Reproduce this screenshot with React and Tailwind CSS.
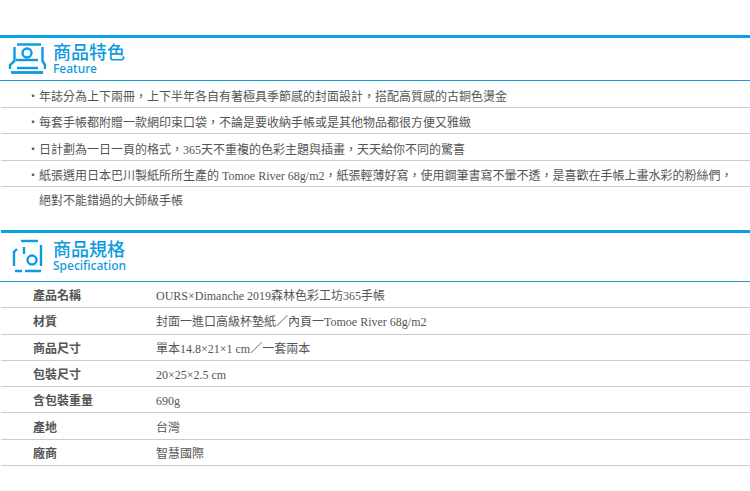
const features = [
  '年誌分為上下兩冊，上下半年各自有著極具季節感的封面設計，搭配高質感的古銅色燙金',
  '每套手帳都附贈一款網印束口袋，不論是要收納手帳或是其他物品都很方便又雅緻',
  '日計劃為一日一頁的格式，365天不重複的色彩主題與插畫，天天給你不同的驚喜',
  '紙張選用日本巴川製紙所所生產的 Tomoe River 68g/m2，紙張輕薄好寫，使用鋼筆書寫不暈不透，是喜歡在手帳上畫水彩的粉絲們，',
];

const specs = [
  ['產品名稱', 'OURS×Dimanche 2019森林色彩工坊365手帳'],
  ['材質', '封面一進口高級杯墊紙／內頁一Tomoe River 68g/m2'],
  ['商品尺寸', '單本14.8×21×1 cm／一套兩本'],
  ['包裝尺寸', '20×25×2.5 cm'],
  ['含包裝重量', '690g'],
  ['產地', '台灣'],
  ['廠商', '智慧國際'],
];

const bodyFont = "font-['Liberation_Serif','Noto_Sans_CJK_TC',serif]";
const headFont = "font-['Noto_Sans','Noto_Sans_CJK_TC',sans-serif]";

const PrinterIcon = () => (
  <svg width="38" height="33" viewBox="0 0 38 33" fill="none" stroke="#0a9be2" strokeWidth="2.4">
    <path d="M9 2.5H33" />
    <path d="M6.5 5V19L2 23V27" />
    <path d="M34.5 5V19L37 23V27" />
    <circle cx="19" cy="11" r="4.5" />
    <path d="M8 18H30" />
    <path d="M9 26H30" />
    <path d="M3 30.5H35" strokeWidth="2.8" />
  </svg>
);

const FrameIcon = () => (
  <svg width="32" height="36" viewBox="0 0 32 36" fill="none" stroke="#0a9be2" strokeWidth="2.4">
    <path d="M9 2H26" />
    <path d="M29 6V27" />
    <path d="M2 27V13L5 10" />
    <path d="M12 8V15" />
    <circle cx="20" cy="21" r="4.5" />
    <path d="M3 32H10M13 32H29" />
  </svg>
);

const SectionHeader = ({ icon, title, sub, boxClass, iconClass }) => (
  <div className={`flex items-start border-b border-[#1c9ae0] ${boxClass}`}>
    <div className={`flex w-[53px] shrink-0 ${iconClass}`}>{icon}</div>
    <div className={`${headFont} text-[#0d9ade]`}>
      <div className="text-[18px] leading-[20px] font-medium">{title}</div>
      <div className="text-[12px] leading-[14px] font-medium">{sub}</div>
    </div>
  </div>
);

export default function App() {
  return (
    <div className={`${bodyFont} h-[491px] w-[750px] overflow-hidden bg-white text-[12px] text-[#555]`}>
      <div className="h-[35px]" />
      <div className="h-[3px] bg-[#0aa0e6]" />
      <SectionHeader
        icon={<PrinterIcon />}
        title="商品特色"
        sub="Feature"
        boxClass="h-[43px] pt-[4px]"
        iconClass="pl-[8px]"
      />

      <ul>
        {features.map((text) => (
          <li key={text} className="ml-px flex h-[26.5px] items-center border-b border-[#ccc] pt-[6px] pl-[26px] whitespace-nowrap">
            <span className="w-[12px] shrink-0">‧</span>
            <span>{text}</span>
          </li>
        ))}
        <li className="flex h-[27px] items-center pl-[39px]">絕對不能錯過的大師級手帳</li>
      </ul>

      <div className="h-[16px]" />
      <div className="ml-px h-[3px] bg-[#0aa0e6]" />
      <SectionHeader
        icon={<FrameIcon />}
        title="商品規格"
        sub="Specification"
        boxClass="h-[49px] pt-[6px]"
        iconClass="pl-[12px]"
      />

      <div className="ml-px">
        {specs.map(([label, value]) => (
          <div key={label} className="flex h-[26.3px] items-center border-b border-[#ccc] pt-[3px]">
            <div className="w-[155px] shrink-0 pl-[32px] font-bold">{label}</div>
            <div>{value}</div>
          </div>
        ))}
      </div>
    </div>
  );
}
